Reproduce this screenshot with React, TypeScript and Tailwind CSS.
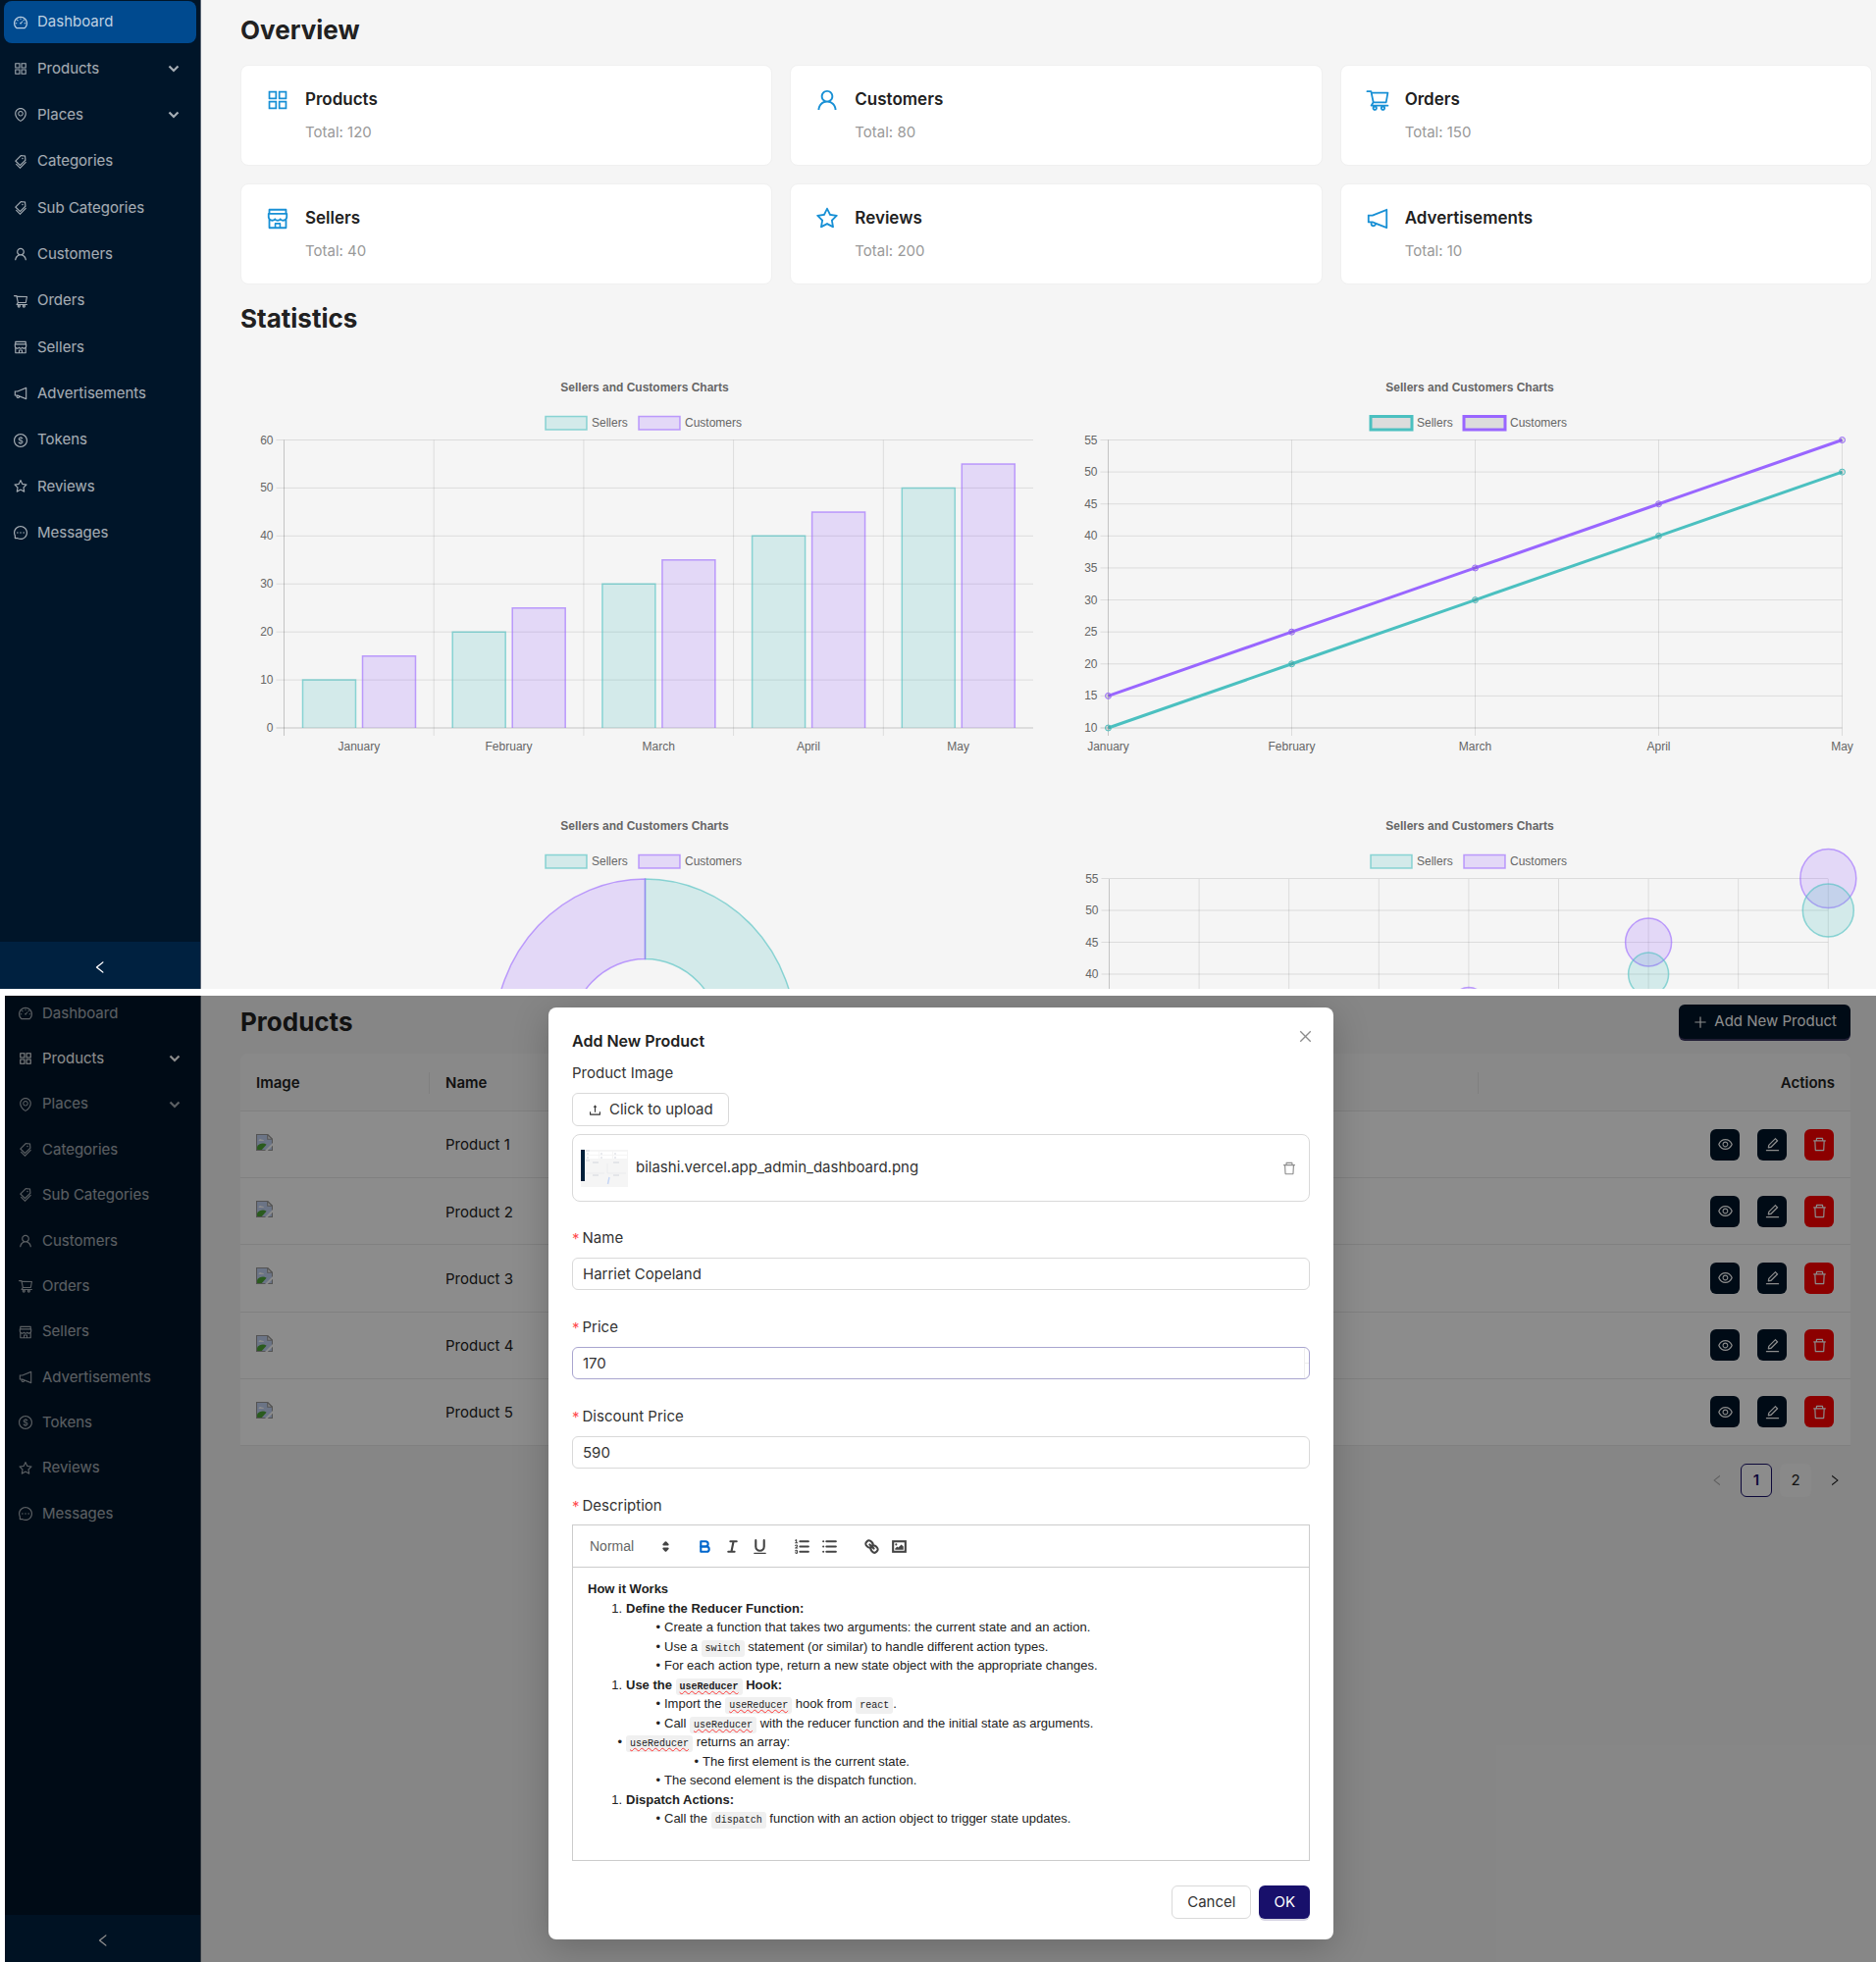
import React from "react";
import {
  AiOutlineAppstore,
  AiOutlineClose,
  AiOutlineDashboard,
  AiOutlineDelete,
  AiOutlineDollar,
  AiOutlineEdit,
  AiOutlineEnvironment,
  AiOutlineEye,
  AiOutlineLeft,
  AiOutlineMessage,
  AiOutlineNotification,
  AiOutlinePlus,
  AiOutlineRight,
  AiOutlineShop,
  AiOutlineShoppingCart,
  AiOutlineStar,
  AiOutlineTags,
  AiOutlineUpload,
  AiOutlineUser,
} from "react-icons/ai";

const NAV = [
  { label: "Dashboard", Icon: AiOutlineDashboard },
  { label: "Products", Icon: AiOutlineAppstore, menu: true },
  { label: "Places", Icon: AiOutlineEnvironment, menu: true },
  { label: "Categories", Icon: AiOutlineTags },
  { label: "Sub Categories", Icon: AiOutlineTags },
  { label: "Customers", Icon: AiOutlineUser },
  { label: "Orders", Icon: AiOutlineShoppingCart },
  { label: "Sellers", Icon: AiOutlineShop },
  { label: "Advertisements", Icon: AiOutlineNotification },
  { label: "Tokens", Icon: AiOutlineDollar },
  { label: "Reviews", Icon: AiOutlineStar },
  { label: "Messages", Icon: AiOutlineMessage },
];

const CARDS = [
  { label: "Products", total: 120, Icon: AiOutlineAppstore },
  { label: "Customers", total: 80, Icon: AiOutlineUser },
  { label: "Orders", total: 150, Icon: AiOutlineShoppingCart },
  { label: "Sellers", total: 40, Icon: AiOutlineShop },
  { label: "Reviews", total: 200, Icon: AiOutlineStar },
  { label: "Advertisements", total: 10, Icon: AiOutlineNotification },
];

const MONTHS = ["January", "February", "March", "April", "May"];
const SELLERS = [10, 20, 30, 40, 50];
const CUSTOMERS = [15, 25, 35, 45, 55];

const TEAL_FILL = "rgba(75,192,192,0.2)";
const TEAL_LINE = "rgba(75,192,192,0.6)";
const TEAL = "#4bc0c0";
const VIOLET_FILL = "rgba(153,102,255,0.2)";
const VIOLET_LINE = "rgba(153,102,255,0.6)";
const VIOLET = "#9966ff";
const GRID = "rgba(0,0,0,0.1)";
const AXIS = "rgba(0,0,0,0.2)";

function Chevron() {
  return (
    <svg viewBox="0 0 12 8" className="ml-auto h-2 w-3" fill="none" stroke="currentColor" strokeWidth="2.2">
      <path d="M1.5 1.5 6 6l4.5-4.5" />
    </svg>
  );
}

function Sidebar({ active, compact }: { active: string; compact?: boolean }) {
  return (
    <aside className="flex w-full flex-col border-r border-[#5b6675] bg-[#001529]">
      <nav className={compact ? "flex h-[546px] flex-col justify-between px-1" : "mt-px flex h-[564px] flex-col justify-between px-1"}>
        {NAV.map(({ label, Icon, menu }) => {
          const on = label === active;
          return (
            <a
              key={label}
              href="#"
              className={
                "flex items-center rounded-lg pl-[9px] text-[15px] " +
                (compact ? "h-9 pr-4 " : "h-[43px] pr-[17px] ") +
                (on && !menu ? "bg-[#004a8f] text-white/75" : on ? "text-white" : "text-white/65")
              }
            >
              <Icon className="mr-[9px] size-4 shrink-0" />
              <span className="whitespace-nowrap">{label}</span>
              {menu && <Chevron />}
            </a>
          );
        })}
      </nav>
      <button type="button" aria-label="Collapse sidebar" className="mt-auto flex h-12 items-center justify-center bg-[#002140] pt-1 text-white">
        <AiOutlineLeft className="size-4" />
      </button>
    </aside>
  );
}

function ChartFrame({ line, children }: { line?: boolean; children: React.ReactNode }) {
  const box = line ? 3 : 1.5;
  return (
    <svg
      viewBox="0 0 821 447"
      className="block w-full overflow-visible"
      fontFamily='"Liberation Sans", Arial, sans-serif'
      fontSize="12"
      fill="#666"
      role="img"
      aria-label="Sellers and Customers Charts"
    >
      <text x="411" y="44" textAnchor="middle" fontWeight="700">
        Sellers and Customers Charts
      </text>
      <rect x="310" y="69.500" width="42" height="13.500" fill={line ? GRID : TEAL_FILL} stroke={line ? TEAL : TEAL_LINE} strokeWidth={box} />
      <text x="357" y="80">Sellers</text>
      <rect x="405" y="69.500" width="42" height="13.500" fill={line ? GRID : VIOLET_FILL} stroke={line ? VIOLET : VIOLET_LINE} strokeWidth={box} />
      <text x="452" y="80">Customers</text>
      {children}
    </svg>
  );
}

function BarChart() {
  const left = 43.5;
  const right = 807;
  const top = 93.5;
  const bottom = 387;
  const step = (right - left) / 5;
  const y = (v: number) => bottom - ((bottom - top) * v) / 60;
  return (
    <ChartFrame>
      {[0, 10, 20, 30, 40, 50, 60].map((v) => (
        <g key={v}>
          <line x1={left - 8} x2={right} y1={y(v)} y2={y(v)} stroke={v ? GRID : AXIS} />
          <text x={left - 11} y={y(v) + 4} textAnchor="end">{v}</text>
        </g>
      ))}
      {MONTHS.map((m, i) => {
        const x = left + step * i;
        return (
          <g key={m}>
            <line x1={x} x2={x} y1={top} y2={bottom + 8} stroke={i ? GRID : AXIS} />
            <text x={x + step / 2} y="410" textAnchor="middle">{m}</text>
            <path d={`M${x + 19} ${bottom}V${y(SELLERS[i])}h54V${bottom}`} fill={TEAL_FILL} stroke={TEAL_LINE} strokeWidth="1.5" />
            <path d={`M${x + 80} ${bottom}V${y(CUSTOMERS[i])}h54V${bottom}`} fill={VIOLET_FILL} stroke={VIOLET_LINE} strokeWidth="1.5" />
          </g>
        );
      })}
    </ChartFrame>
  );
}

function LineChart() {
  const left = 42.5;
  const right = 790.5;
  const top = 93.5;
  const bottom = 387;
  const x = (i: number) => left + ((right - left) * i) / 4;
  const y = (v: number) => bottom - ((bottom - top) * (v - 10)) / 45;
  const series = [
    { data: SELLERS, color: TEAL },
    { data: CUSTOMERS, color: VIOLET },
  ];
  return (
    <ChartFrame line>
      {[10, 15, 20, 25, 30, 35, 40, 45, 50, 55].map((v) => (
        <g key={v}>
          <line x1={left - 8} x2={right} y1={y(v)} y2={y(v)} stroke={v > 10 ? GRID : AXIS} />
          <text x={left - 11} y={y(v) + 4} textAnchor="end">{v}</text>
        </g>
      ))}
      {MONTHS.map((m, i) => (
        <g key={m}>
          <line x1={x(i)} x2={x(i)} y1={top} y2={bottom + 8} stroke={i ? GRID : AXIS} />
          <text x={x(i)} y="410" textAnchor="middle">{m}</text>
        </g>
      ))}
      {series.map(({ data, color }) => (
        <g key={color} stroke={color}>
          <polyline points={data.map((v, i) => `${x(i)},${y(v)}`).join(" ")} fill="none" strokeWidth="3" />
          {data.map((v, i) => (
            <circle key={v} cx={x(i)} cy={y(v)} r="3" fill={GRID} strokeWidth="1" />
          ))}
        </g>
      ))}
    </ChartFrame>
  );
}

function DonutChart() {
  return (
    <ChartFrame>
      <path d="M411.500 94A154 162.500 0 0 1 411.500 419V337.500A77 81 0 0 0 411.500 175.500Z" fill={TEAL_FILL} stroke={TEAL_LINE} strokeWidth="1.5" />
      <path d="M411.500 94A154 162.500 0 0 0 411.500 419V337.500A77 81 0 0 1 411.500 175.500Z" fill={VIOLET_FILL} stroke={VIOLET_LINE} strokeWidth="1.5" />
    </ChartFrame>
  );
}

function BubbleChart() {
  const left = 43.5;
  const step = 91.6;
  const y = (v: number) => 93.5 + (55 - v) * 6.5;
  const customers = [
    { x: 4, v: 35, rx: 18, ry: 19 },
    { x: 6, v: 45, rx: 23.5, ry: 24.5 },
    { x: 8, v: 55, rx: 28.5, ry: 30 },
  ];
  const sellers = [
    { x: 6, v: 40, rx: 20.5, ry: 22 },
    { x: 8, v: 50, rx: 26, ry: 27 },
  ];
  return (
    <ChartFrame>
      {[40, 45, 50, 55].map((v) => (
        <g key={v}>
          <line x1={left - 8} x2={left + step * 8} y1={y(v)} y2={y(v)} stroke={GRID} />
          <text x={left - 11} y={y(v) + 4} textAnchor="end">{v}</text>
        </g>
      ))}
      {[0, 1, 2, 3, 4, 5, 6, 7, 8].map((i) => (
        <line key={i} x1={left + step * i} x2={left + step * i} y1="94" y2="380" stroke={i ? GRID : AXIS} />
      ))}
      {customers.map((b) => (
        <ellipse key={b.v} cx={left + step * b.x} cy={y(b.v)} rx={b.rx} ry={b.ry} fill={VIOLET_FILL} stroke={VIOLET_LINE} strokeWidth="1.5" />
      ))}
      {sellers.map((b) => (
        <ellipse key={b.v} cx={left + step * b.x} cy={y(b.v)} rx={b.rx} ry={b.ry} fill={TEAL_FILL} stroke={TEAL_LINE} strokeWidth="1.5" />
      ))}
    </ChartFrame>
  );
}

function Dashboard() {
  return (
    <section className="flex h-[1008px] overflow-hidden bg-[#f5f5f5]">
      <div className="flex w-[205px] shrink-0">
        <Sidebar active="Dashboard" />
      </div>
      <main className="min-w-0 flex-1 pl-10 pr-1 pt-[13px]">
        <h1 className="text-[26px] font-bold leading-9 text-[#212121]">Overview</h1>
        <div className="mt-[17px] grid grid-cols-3 gap-x-[18px] gap-y-[18px]">
          {CARDS.map(({ label, total, Icon }) => (
            <article key={label} className="flex h-[103px] rounded-lg border border-[#f0f0f0] bg-white pl-6 pt-[22px]">
              <Icon className="size-[26px] text-[#1890d5]" />
              <div className="ml-[15px]">
                <h2 className="text-[17px] font-semibold leading-6 text-[#212121]">{label}</h2>
                <p className="mt-2.5 text-[15px] leading-6 text-[#999]">Total: {total}</p>
              </div>
            </article>
          ))}
        </div>
        <h1 className="mt-[17px] text-[26px] font-bold leading-9 text-[#212121]">Statistics</h1>
        <div className="mt-3 grid grid-cols-2 gap-x-5 pl-px">
          <BarChart />
          <LineChart />
          <DonutChart />
          <BubbleChart />
        </div>
      </main>
    </section>
  );
}

function BrokenImage() {
  return (
    <svg viewBox="0 0 16 16" className="-mt-1 size-[17px]" role="img" aria-label="Product image">
      <path d="M.5.5H11l4.500 4.500v10.500H.5Z" fill="#c3d3f5" stroke="#9a9a9a" />
      <path d="M11 .5V5h4.500Z" fill="#f2f2f2" stroke="#9a9a9a" />
      <path d="M2.500 6.500c0-1.500 2-2.500 3-1 1.500 0 2 .5 2 1Z" fill="#fff" />
      <path d="M1 15V12c2-3 6-4 9-2L5.500 15Z" fill="#4ea637" />
      <path d="M16 8.500 8.500 16H11l5-5Z" fill="#fff" />
    </svg>
  );
}

function ActionButton({ label, danger, children }: { label: string; danger?: boolean; children: React.ReactNode }) {
  return (
    <button
      type="button"
      aria-label={label}
      className={"flex h-8 w-[30px] items-center justify-center rounded-md text-white " + (danger ? "bg-[#ff0000]" : "bg-[#001529]")}
    >
      {children}
    </button>
  );
}

function ProductsPage() {
  return (
    <main className="min-w-0 flex-1 pl-10 pr-[26px] pt-[9px]">
      <div className="flex items-center justify-between">
        <h1 className="text-[26px] font-bold leading-[35px] text-[#212121]">Products</h1>
        <button type="button" className="flex h-[35px] items-center rounded-md bg-[#001529] px-[14px] text-[15px] text-white shadow-[0_2px_0_#3b3560]">
          <AiOutlinePlus className="mr-1.5 size-4" />
          Add New Product
        </button>
      </div>
      <table className="mt-[15px] h-[400px] w-full border-separate border-spacing-0 text-left text-[15px] text-[#212121]">
        <thead>
          <tr className="h-[59px] font-semibold">
            <th className="w-[193px] rounded-tl-lg border-b border-[#eaeaea] bg-[#fafafa] p-0 pt-0.5 font-semibold">
              <span className="block border-r border-[#eaeaea] pl-4">Image</span>
            </th>
            <th className="border-b border-[#eaeaea] bg-[#fafafa] p-0 pt-0.5 font-semibold">
              <span className="block border-r border-[#eaeaea] pl-4">Name</span>
            </th>
            <th className="w-[379px] rounded-tr-lg border-b border-[#eaeaea] bg-[#fafafa] pr-4 pt-0.5 text-right font-semibold">Actions</th>
          </tr>
        </thead>
        <tbody className="bg-white">
          {[1, 2, 3, 4, 5].map((n) => (
            <tr key={n}>
              <td className="border-b border-[#eaeaea] pl-4"><BrokenImage /></td>
              <td className="border-b border-[#eaeaea] pl-4 pt-0.5">Product {n}</td>
              <td className="border-b border-[#eaeaea] pr-[17px]">
                <div className="flex justify-end gap-[18px]">
                  <ActionButton label="View"><AiOutlineEye className="size-[17px]" /></ActionButton>
                  <ActionButton label="Edit"><AiOutlineEdit className="size-[17px]" /></ActionButton>
                  <ActionButton label="Delete" danger><AiOutlineDelete className="size-[17px]" /></ActionButton>
                </div>
              </td>
            </tr>
          ))}
        </tbody>
      </table>
      <div className="mt-[18px] flex justify-end gap-2 text-[15px] text-[#212121]">
        <button type="button" aria-label="Previous page" className="flex h-[34px] w-8 items-center justify-center text-[#b0b0b0]"><AiOutlineLeft className="size-[14px]" /></button>
        <button type="button" className="h-[34px] w-8 rounded-md border border-[#18106b] bg-white font-semibold text-[#18106b]">1</button>
        <button type="button" className="h-[34px] w-8 rounded-md bg-white/40">2</button>
        <button type="button" aria-label="Next page" className="flex h-[34px] w-8 items-center justify-center"><AiOutlineRight className="size-[14px]" /></button>
      </div>
    </main>
  );
}

function FieldLabel({ id, children }: { id: string; children: React.ReactNode }) {
  return (
    <label id={id + "-label"} htmlFor={id} className="flex h-6 items-center text-[15px] text-[#333]">
      <span className="mr-[3px] pt-0.5 text-[15px] text-[#ff4d4f]">*</span>
      {children}
    </label>
  );
}

function Field({ id, label, value, focused }: { id: string; label: string; value: string; focused?: boolean }) {
  return (
    <div className="mb-[26px] flex flex-col">
      <FieldLabel id={id}>{label}</FieldLabel>
      <div className="relative mt-2 flex">
        <input
          id={id}
          defaultValue={value}
          className={"h-[33px] w-full rounded-md border px-2.5 text-[15px] text-[#333] outline-none " + (focused ? "border-[#a9a5cf]" : "border-[#d9d9d9]")}
        />
        {focused && (
          <span className="absolute right-px top-px flex h-[31px] w-[5px] flex-col rounded-r-md border-l border-[#eee]">
            <span className="flex-1 border-b border-[#eee]" />
            <span className="flex-1" />
          </span>
        )}
      </div>
    </div>
  );
}

function Tool({ label, on, children }: { label: string; on?: boolean; children: React.ReactNode }) {
  return (
    <button type="button" aria-label={label} className={"flex w-7 justify-center " + (on ? "text-[#0066cc]" : "text-[#444]")}>
      <svg viewBox="0 0 18 18" className="size-[19px]" fill="none" stroke="currentColor" strokeWidth="2" strokeLinecap="round" strokeLinejoin="round">
        {children}
      </svg>
    </button>
  );
}

function Toolbar() {
  return (
    <div className="flex h-[43px] items-center border-b border-[#ccc] pl-[17px]">
      <div className="relative flex w-[87px] items-center text-[#444]">
        <select
          aria-label="Text style"
          className="w-full appearance-none bg-transparent font-['Liberation_Sans',Arial,sans-serif] text-[14px] text-[#666]"
          defaultValue="Normal"
        >
          <option>Normal</option>
        </select>
        <svg viewBox="0 0 18 18" className="pointer-events-none absolute right-0 size-[19px]" fill="currentColor" stroke="currentColor" strokeWidth="2" strokeLinejoin="round">
          <path d="M7 11 9 13 11 11ZM7 7 9 5 11 7Z" />
        </svg>
      </div>
      <div className="ml-4 flex">
        <Tool label="Bold" on>
          <path d="M5 4H9.500A2.500 2.500 0 0 1 9.500 9H5Z" />
          <path d="M5 9h5.500A2.500 2.500 0 0 1 10.500 14H5Z" />
        </Tool>
        <Tool label="Italic">
          <path d="M7 4H13M5 14H11M8 14 10 4" />
        </Tool>
        <Tool label="Underline">
          <path d="M5 3V9a4 4 0 0 0 8 0V3" />
          <rect x="3" y="15" width="12" height="1" rx="0.500" fill="currentColor" stroke="none" />
        </Tool>
      </div>
      <div className="ml-[15px] flex">
        <Tool label="Numbered list">
          <path d="M7 4H15M7 9H15M7 14H15" />
          <path strokeWidth="1" d="M2.500 3 3.500 2.500V5.500M2.500 5.500h2M4.500 10.500h-2c0-.234 1.850-1.076 1.850-2.234A.959.959 0 0 0 2.500 8.156M2.500 14.846a.959.959 0 0 0 1.850-.109A.7.7 0 0 0 3.750 14a.688.688 0 0 0 .6-.736.959.959 0 0 0-1.850-.109" />
        </Tool>
        <Tool label="Bulleted list">
          <path d="M6 4H15M6 9H15M6 14H15M3 4h0M3 9h0M3 14h0" />
        </Tool>
      </div>
      <div className="ml-[15px] flex">
        <Tool label="Link">
          <path d="M7 7 11 11M8.900 4.577a3.476 3.476 0 0 1 .36 4.679A3.476 3.476 0 0 1 4.577 8.900C3.185 7.500 2.035 6.400 4.217 4.217S7.500 3.185 8.900 4.577ZM13.423 9.100a3.476 3.476 0 0 0-4.679-.36 3.476 3.476 0 0 0 .36 4.679c1.392 1.392 2.500 2.542 4.679.36S14.815 10.500 13.423 9.100Z" />
        </Tool>
        <Tool label="Image">
          <rect x="3" y="4" width="12" height="10" strokeLinejoin="miter" />
          <circle cx="6" cy="7" r="1" fill="currentColor" stroke="none" />
          <path d="M5 12V11L7 9 8 10 11 7 13 9V12Z" fill="currentColor" stroke="none" />
        </Tool>
      </div>
    </div>
  );
}

function Code({ children, flagged }: { children: string; flagged?: boolean }) {
  return (
    <code className="rounded-[3px] bg-[#f0f0f0] px-1 py-[3px] font-['Liberation_Mono',monospace] text-[10px] leading-none">
      <span className={flagged ? "underline decoration-[#ff3b3b] decoration-wavy decoration-1 underline-offset-1" : ""}>{children}</span>
    </code>
  );
}

function Item({ level, mark, children }: { level: 1 | 2 | 3; mark: string; children: React.ReactNode }) {
  const pad = level === 1 ? "pl-[39px]" : level === 2 ? "pl-[78px]" : "pl-[117px]";
  return (
    <li className={"whitespace-nowrap " + pad}>
      <span className="-ml-5 mr-1 inline-block w-4 text-right">{mark}</span>
      {children}
    </li>
  );
}

function Description() {
  return (
    <div
      id="description"
      role="textbox"
      aria-multiline="true"
      aria-labelledby="description-label"
      className="min-h-[298px] px-[15px] py-3 font-['Liberation_Sans',Arial,sans-serif] text-[13px] leading-normal text-[#222]"
    >
      <p className="font-bold">How it Works</p>
      <ul>
        <Item level={1} mark="1."><b>Define the Reducer Function:</b></Item>
        <Item level={2} mark="•">Create a function that takes two arguments: the current state and an action.</Item>
        <Item level={2} mark="•">Use a <Code>switch</Code> statement (or similar) to handle different action types.</Item>
        <Item level={2} mark="•">For each action type, return a new state object with the appropriate changes.</Item>
        <Item level={1} mark="1."><b>Use the <Code flagged>useReducer</Code> Hook:</b></Item>
        <Item level={2} mark="•">Import the <Code flagged>useReducer</Code> hook from <Code>react</Code>.</Item>
        <Item level={2} mark="•">Call <Code flagged>useReducer</Code> with the reducer function and the initial state as arguments.</Item>
        <Item level={1} mark="•"><Code flagged>useReducer</Code> returns an array:</Item>
        <Item level={3} mark="•">The first element is the current state.</Item>
        <Item level={2} mark="•">The second element is the dispatch function.</Item>
        <Item level={1} mark="1."><b>Dispatch Actions:</b></Item>
        <Item level={2} mark="•">Call the <Code>dispatch</Code> function with an action object to trigger state updates.</Item>
      </ul>
    </div>
  );
}

function Thumbnail() {
  return (
    <svg viewBox="0 0 48 38" className="h-[38px] w-12" role="img" aria-label="Uploaded image preview">
      <rect width="48" height="38" fill="#f5f5f5" />
      <rect width="4" height="32" fill="#001f3a" />
      <path d="M5 2h13v3H5ZM19 2h13v3H19ZM33 2h14v3H33ZM5 6h13v3H5ZM19 6h13v3H19ZM33 6h14v3H33Z" fill="#fff" />
      <path d="M5 1h4M6 4h2M20 4h2M34 4h2M6 8h2M20 8h2M34 8h2M5 11h4M12 13h6M33 13h6M12 26h6M33 26h6" stroke="#c9cdd6" strokeWidth="0.8" />
      <path d="M5 24h19M27 24h19M27 14v10" stroke="#e4e6ea" strokeWidth="0.6" />
      <path d="M27.500 35 29 28" stroke="#c6d6f5" strokeWidth="1.5" />
    </svg>
  );
}

function AddProductDialog() {
  return (
    <div role="dialog" aria-labelledby="dialog-title" className="relative w-[800px] rounded-lg bg-white px-6 pb-[21px] pt-5 shadow-[0_8px_36px_rgba(0,0,0,0.22)]">
      <h2 id="dialog-title" className="text-[16px] font-semibold leading-7 text-[#212121]">Add New Product</h2>
      <button type="button" aria-label="Close" className="absolute right-5 top-[21px] text-[#8c8c8c]">
        <AiOutlineClose className="size-[17px]" />
      </button>
      <form className="mt-[7px]" onSubmit={(e) => e.preventDefault()}>
        <p className="text-[15px] leading-6 text-[#333]">Product Image</p>
        <button type="button" className="mt-2 flex h-[34px] items-center rounded-md border border-[#d9d9d9] px-[15px] text-[15px] text-[#333]">
          <AiOutlineUpload className="mr-[7px] size-[15px]" />
          Click to upload
        </button>
        <div className="mb-[25px] mt-2 flex h-[69px] items-center rounded-lg border border-[#d9d9d9] pl-2 pr-3 text-[15px] text-[#333]">
          <Thumbnail />
          <span className="ml-2">bilashi.vercel.app_admin_dashboard.png</span>
          <button type="button" aria-label="Remove file" className="ml-auto text-[#8c8c8c]"><AiOutlineDelete className="size-4" /></button>
        </div>
        <Field id="name" label="Name" value="Harriet Copeland" />
        <Field id="price" label="Price" value="170" focused />
        <Field id="discount" label="Discount Price" value="590" />
        <FieldLabel id="description">Description</FieldLabel>
        <div className="mt-[7px] border border-[#ccc]">
          <Toolbar />
          <Description />
        </div>
        <div className="mt-[25px] flex justify-end gap-2 text-[15px]">
          <button type="button" className="h-[34px] rounded-md border border-[#d9d9d9] px-[15px] text-[#333]">Cancel</button>
          <button type="submit" className="h-[34px] rounded-md bg-[#18106b] px-[15px] text-white shadow-[0_2px_0_#d5d3e2]">OK</button>
        </div>
      </form>
    </div>
  );
}

function ProductsScreen() {
  return (
    <section className="relative ml-[5px] mt-[7px] flex h-[985px] overflow-hidden bg-[#f5f5f5]">
      <div className="flex w-[200px] shrink-0">
        <Sidebar active="Products" compact />
      </div>
      <ProductsPage />
      <div className="absolute inset-0 flex items-start justify-center bg-black/45 pl-px pt-3">
        <AddProductDialog />
      </div>
    </section>
  );
}

export default function App() {
  return (
    <div className="bg-white font-[Inter,sans-serif]">
      <Dashboard />
      <ProductsScreen />
    </div>
  );
}
